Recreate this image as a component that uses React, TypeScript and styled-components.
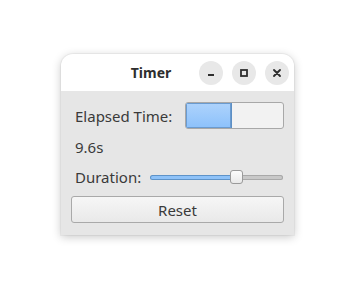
import React from "react";
import styled, { createGlobalStyle } from "styled-components";

const Global = createGlobalStyle`
  html, body { margin: 0; padding: 0; background: #ffffff; }
  body { font-family: "Noto Sans", "DejaVu Sans", sans-serif; }
`;

const Page = styled.div`
  width: 355px;
  height: 301px;
  display: flex;
  padding: 54px 0 0 61px;
  box-sizing: border-box;
`;

const Window = styled.div`
  width: 233px;
  height: 181px;
  display: flex;
  flex-direction: column;
  border-radius: 12px 12px 0 0;
  background: #e6e6e6;
  box-shadow: 0 2px 10px rgba(0, 0, 0, 0.22), 0 0 0 1px rgba(0, 0, 0, 0.04);
  overflow: hidden;
`;

const TitleBar = styled.div`
  height: 37px;
  flex: none;
  background: #ffffff;
  display: flex;
  align-items: center;
  padding-right: 5px;
  gap: 9px;
`;

const Title = styled.div`
  flex: 1;
  text-align: center;
  padding-left: 51px;
  font-weight: 700;
  font-size: 14px;
  color: #2e2e2e;
`;

const CircleBtn = styled.div`
  width: 24px;
  height: 24px;
  border-radius: 50%;
  background: #e8e8e8;
  display: flex;
  align-items: center;
  justify-content: center;
`;

const Content = styled.div`
  flex: 1;
  display: flex;
  flex-direction: column;
  padding: 11px 10px 0 10px;
`;

const Row = styled.div<{ $h: number }>`
  display: flex;
  align-items: center;
  height: ${(p) => p.$h}px;
  padding-left: 4px;
  font-size: 15px;
  color: #3a3a3a;
`;

const Label = styled.span<{ $w: number }>`
  width: ${(p) => p.$w}px;
  flex: none;
`;

const Progress = styled.div`
  width: 99px;
  height: 27px;
  box-sizing: border-box;
  border: 1px solid #a8a8a8;
  border-radius: 3px;
  background: #f2f2f2;
  overflow: hidden;
  display: flex;
`;

const ProgressFill = styled.div`
  height: 100%;
  background: linear-gradient(#aed3fc, #8cc1fb);
  border-right: 1px solid #5d8fc4;
  box-shadow: inset 0 0 0 1px #6a9bd0;
  box-sizing: border-box;
`;

const Slider = styled.div`
  position: relative;
  width: 133px;
  height: 16px;
  display: flex;
  align-items: center;
`;

const Track = styled.div`
  width: 100%;
  height: 5px;
  border-radius: 3px;
  background: #c8c8c8;
  box-shadow: inset 0 0 0 1px #a9a9a9;
  display: flex;
  overflow: hidden;
`;

const TrackFill = styled.div`
  height: 100%;
  background: #8ec2f8;
  box-shadow: inset 0 0 0 1px #5e93c8;
  border-radius: 3px;
`;

const Thumb = styled.div`
  position: absolute;
  top: 1px;
  width: 13px;
  height: 14px;
  box-sizing: border-box;
  border: 1px solid #9a9a9a;
  border-radius: 3px;
  background: linear-gradient(#fcfcfc, #e9e9e9);
`;

const Button = styled.button`
  margin-top: 7px;
  height: 27px;
  width: 213px;
  box-sizing: border-box;
  border: 1px solid #a9a9a9;
  border-radius: 3px;
  background: linear-gradient(#f6f6f6, #e9e9e9);
  font-family: inherit;
  font-size: 15px;
  color: #3a3a3a;
  padding: 0;
`;

export default function App() {
  const progress = 0.47;
  const value = 0.65;
  return (
    <Page>
      <Global />
      <Window>
        <TitleBar>
          <Title>Timer</Title>
          <CircleBtn>
            <svg width="10" height="10" viewBox="0 0 10 10">
              <rect x="2" y="6" width="6" height="2" fill="#2e2e2e" />
            </svg>
          </CircleBtn>
          <CircleBtn>
            <svg width="10" height="10" viewBox="0 0 10 10">
              <rect x="2" y="2" width="6" height="6" fill="none" stroke="#2e2e2e" strokeWidth="1.8" />
            </svg>
          </CircleBtn>
          <CircleBtn>
            <svg width="10" height="10" viewBox="0 0 10 10">
              <path d="M2 2 L8 8 M8 2 L2 8" stroke="#2e2e2e" strokeWidth="1.9" strokeLinecap="round" />
            </svg>
          </CircleBtn>
        </TitleBar>
        <Content>
          <Row $h={27}>
            <Label $w={110}>Elapsed Time:</Label>
            <Progress>
              <ProgressFill style={{ width: `${progress * 100}%` }} />
            </Progress>
          </Row>
          <Row $h={36}>9.6s</Row>
          <Row $h={24}>
            <Label $w={75}>Duration:</Label>
            <Slider>
              <Track>
                <TrackFill style={{ width: `${value * 100}%` }} />
              </Track>
              <Thumb style={{ left: `calc(${value * 100}% - 6px)` }} />
            </Slider>
          </Row>
          <Button>Reset</Button>
        </Content>
      </Window>
    </Page>
  );
}
